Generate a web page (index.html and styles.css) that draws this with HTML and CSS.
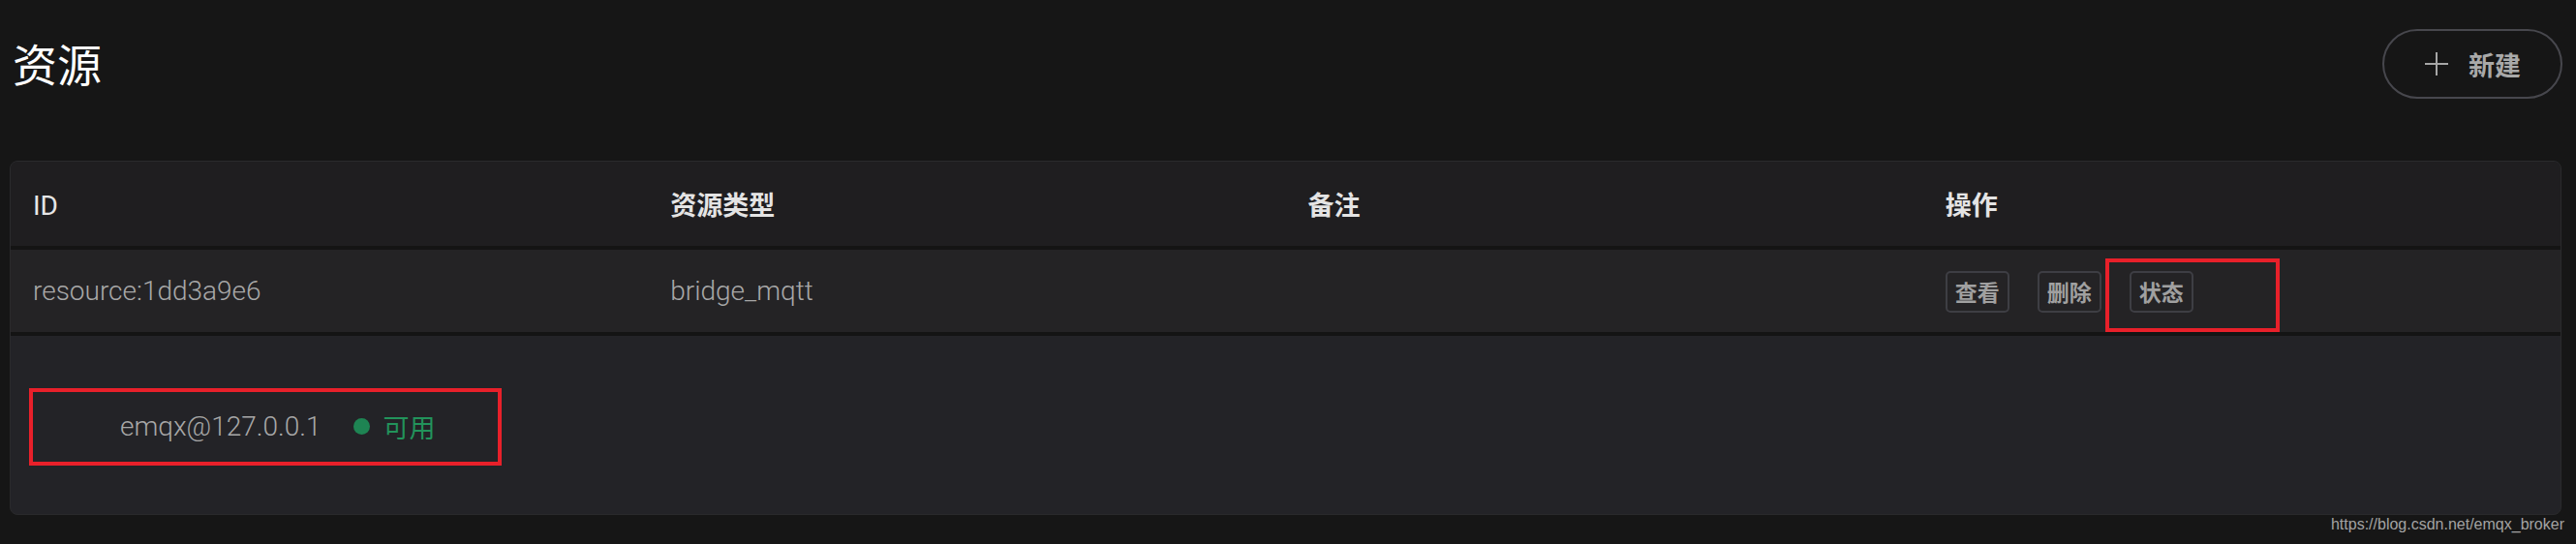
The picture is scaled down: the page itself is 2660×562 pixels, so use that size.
FILE: index.html
```html
<!DOCTYPE html>
<html lang="zh-CN">
<head>
<meta charset="utf-8">
<title>资源</title>
<link rel="stylesheet" href="styles.css">
</head>
<body>
<div class="page">
  <header class="page-head">
    <h1 class="title">资源</h1>
    <button class="btn-new" type="button">
      <svg class="plus" width="24" height="24" viewBox="0 0 24 24"><path d="M12 0V24M0 12H24" stroke="#a6a6a6" stroke-width="2" fill="none"/></svg>
      <span>新建</span>
    </button>
  </header>

  <div class="card">
    <div class="row row-head">
      <div class="cell"><span class="latin-head">ID</span></div>
      <div class="cell">资源类型</div>
      <div class="cell">备注</div>
      <div class="cell">操作</div>
    </div>
    <div class="row row-body">
      <div class="cell">resource:1dd3a9e6</div>
      <div class="cell">bridge_mqtt</div>
      <div class="cell"></div>
      <div class="cell actions">
        <button class="btn-mini" type="button">查看</button>
        <button class="btn-mini" type="button">删除</button>
        <button class="btn-mini btn-status" type="button">状态<span class="mark mark-status"></span></button>
      </div>
    </div>
    <div class="expand">
      <div class="node">
        <span class="node-name">emqx@127.0.0.1</span>
        <span class="dot"></span>
        <span class="ok">可用</span>
      </div>
      <span class="mark mark-node"></span>
    </div>
  </div>
  <div class="watermark">https://blog.csdn.net/emqx_broker</div>
</div>
</body>
</html>
```

FILE: styles.css
```css
* { box-sizing: border-box; }
html, body {
  margin: 0;
  padding: 0;
  background: #161616;
}
body {
  font-family: Roboto, "Noto Sans CJK SC", sans-serif;
  color: #a6a6a6;
  width: 2660px;
  height: 562px;
  overflow: hidden;
}
.page {
  padding: 0 15px 0 10px;
}
.page-head {
  display: flex;
  align-items: center;
  justify-content: space-between;
  padding-top: 30px;
  height: 102px;
  margin-bottom: 64px;
}
.title {
  margin: 0 0 0 3px;
  font-family: "Noto Sans CJK SC", sans-serif;
  font-size: 46px;
  font-weight: 400;
  color: #ffffff;
  line-height: 72px;
  position: relative;
  top: -2px;
}
.btn-new {
  display: flex;
  align-items: center;
  gap: 21px;
  height: 72px;
  width: 186px;
  margin-right: -1px;
  padding: 0 0 0 42px;
  background: transparent;
  border: 2px solid #47474d;
  border-radius: 36px;
  color: #a9a9a9;
  font-family: "Noto Sans CJK SC", sans-serif;
  font-size: 27px;
  font-weight: 700;
}
.btn-new span { line-height: 1; }
.plus { display: block; }

.card {
  border: 1px solid #2a2a2c;
  border-radius: 8px;
  overflow: hidden;
  background: #232327;
}
.row {
  display: grid;
  grid-template-columns: repeat(4, 1fr);
  align-items: center;
}
.cell {
  padding: 0 23px;
  white-space: nowrap;
}
.row-head {
  height: 91px;
  background: #1f1e20;
  border-bottom: 4px solid #141414;
  font-family: "Noto Sans CJK SC", sans-serif;
  font-size: 27px;
  font-weight: 700;
  color: #e4e4e4;
}
.latin-head {
  font-family: Roboto, sans-serif;
  font-weight: 400;
  font-size: 28px;
  color: #e6e6e6;
}
.row-body {
  height: 89px;
  background: #242325;
  border-bottom: 4px solid #141414;
  font-size: 28px;
  font-weight: 300;
  color: #a8a8a8;
}
.actions {
  display: flex;
  gap: 29px;
  position: relative;
  top: 1px;
}
.btn-mini {
  position: relative;
  height: 43px;
  width: 66px;
  padding: 0;
  background: #242325;
  border: 2px solid #3e3e44;
  border-radius: 5px;
  color: #a0a0a0;
  font-family: "Noto Sans CJK SC", sans-serif;
  font-size: 23px;
  font-weight: 700;
  line-height: 1;
}
.mark {
  position: absolute;
  border: 4px solid #e8202a;
  pointer-events: none;
}
.mark-status {
  left: -27px;
  top: -15px;
  width: 180px;
  height: 76px;
}
.expand {
  position: relative;
  height: 184px;
  display: flex;
  align-items: center;
  padding-left: 113px;
}
.node {
  display: flex;
  align-items: center;
  position: relative;
  top: 1px;
}
.node-name {
  font-size: 28px;
  font-weight: 300;
  color: #a8a8a8;
}
.dot {
  width: 17px;
  height: 17px;
  border-radius: 50%;
  background: #1e8453;
  margin-left: 34px;
  margin-right: 13px;
}
.ok {
  font-family: "Noto Sans CJK SC", sans-serif;
  font-size: 27px;
  color: #22935b;
}
.mark-node {
  left: 19px;
  top: 54px;
  width: 488px;
  height: 80px;
}
.watermark {
  text-align: right;
  margin-right: -3px;
  font-family: "Liberation Sans", sans-serif;
  font-size: 16px;
  line-height: 20px;
  color: #a3a3a3;
}
```
